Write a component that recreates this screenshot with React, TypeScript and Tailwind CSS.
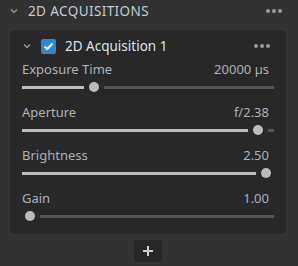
import React from "react";

const font = { fontFamily: '"Noto Sans", "Open Sans", sans-serif' };

function Dots() {
  return (
    <div className="flex items-center gap-[2px]">
      <span className="w-[4px] h-[4px] rounded-full bg-[#9a9a9a]" />
      <span className="w-[4px] h-[4px] rounded-full bg-[#9a9a9a]" />
      <span className="w-[4px] h-[4px] rounded-full bg-[#9a9a9a]" />
    </div>
  );
}

function Chevron() {
  return (
    <svg width="8" height="6" viewBox="0 0 8 6" className="block">
      <path d="M1 1.5 L4 4.5 L7 1.5" fill="none" stroke="#9a9a9a" strokeWidth="1.4" />
    </svg>
  );
}

function Slider({ f }: { f: number }) {
  const left = 3 + 236 * f;
  const filled = Math.max(0, left - 5);
  const gapL = left - filled;
  const rest = 252 - left - 10;
  const gapR = Math.min(5, Math.max(0, rest));
  return (
    <div className="flex items-center h-[10px] w-[252px]">
      <div className="h-[3px] bg-[#bdbdbd] shrink-0" style={{ width: filled }} />
      <div className="shrink-0" style={{ width: gapL }} />
      <div className="w-[10px] h-[10px] rounded-full bg-[#bcbcbc] shrink-0" />
      <div className="shrink-0" style={{ width: gapR }} />
      <div className="h-[3px] bg-[#555555] flex-1" />
    </div>
  );
}

function Row({ label, value, f }: { label: string; value: string; f: number }) {
  return (
    <div className="flex flex-col">
      <div className="flex justify-between items-center h-[18px] pr-[5px] text-[13px] text-[#aab2bb]">
        <span>{label}</span>
        <span>{value}</span>
      </div>
      <div className="mt-[3px]">
        <Slider f={f} />
      </div>
    </div>
  );
}

export default function App() {
  return (
    <div className="w-[298px] h-[266px] bg-[#323232] flex flex-col" style={font}>
      <div className="flex items-center h-[22px] pl-[10px] pr-[16px]">
        <Chevron />
        <span className="ml-[10px] text-[13.5px] tracking-[0.4px] text-[#c3ccd6]">2D ACQUISITIONS</span>
        <div className="ml-auto">
          <Dots />
        </div>
      </div>
      <div className="mt-[8px] mx-[10px] w-[276px] bg-[#282828] rounded-[4px] pt-[8px] pb-[13px] px-[12px] flex flex-col">
        <div className="flex items-center h-[16px]">
          <div className="ml-[1px]">
            <Chevron />
          </div>
          <div className="ml-[10px] w-[15px] h-[15px] rounded-[2px] bg-[#2f86d1] flex items-center justify-center">
            <svg width="11" height="9" viewBox="0 0 11 9">
              <path d="M1.5 4.5 L4.2 7 L9.5 1.5" fill="none" stroke="#ffffff" strokeWidth="2" />
            </svg>
          </div>
          <span className="ml-[9px] text-[13.5px] text-[#dde3ea]">2D Acquisition 1</span>
          <div className="ml-auto mr-[4px]">
            <Dots />
          </div>
        </div>
        <div className="mt-[7px] flex flex-col gap-[12px]">
          <Row label="Exposure Time" value="20000 µs" f={0.271} />
          <Row label="Aperture" value="f/2.38" f={0.966} />
          <Row label="Brightness" value="2.50" f={1} />
          <Row label="Gain" value="1.00" f={0} />
        </div>
      </div>
      <div className="flex justify-center mt-[6px]">
        <div className="w-[28px] h-[22px] rounded-[3px] bg-[#272727] flex items-center justify-center ml-[-2px]">
          <svg width="10" height="10" viewBox="0 0 10 10">
            <path d="M5 0 V10 M0 5 H10" stroke="#cfcfcf" strokeWidth="2" />
          </svg>
        </div>
      </div>
    </div>
  );
}
